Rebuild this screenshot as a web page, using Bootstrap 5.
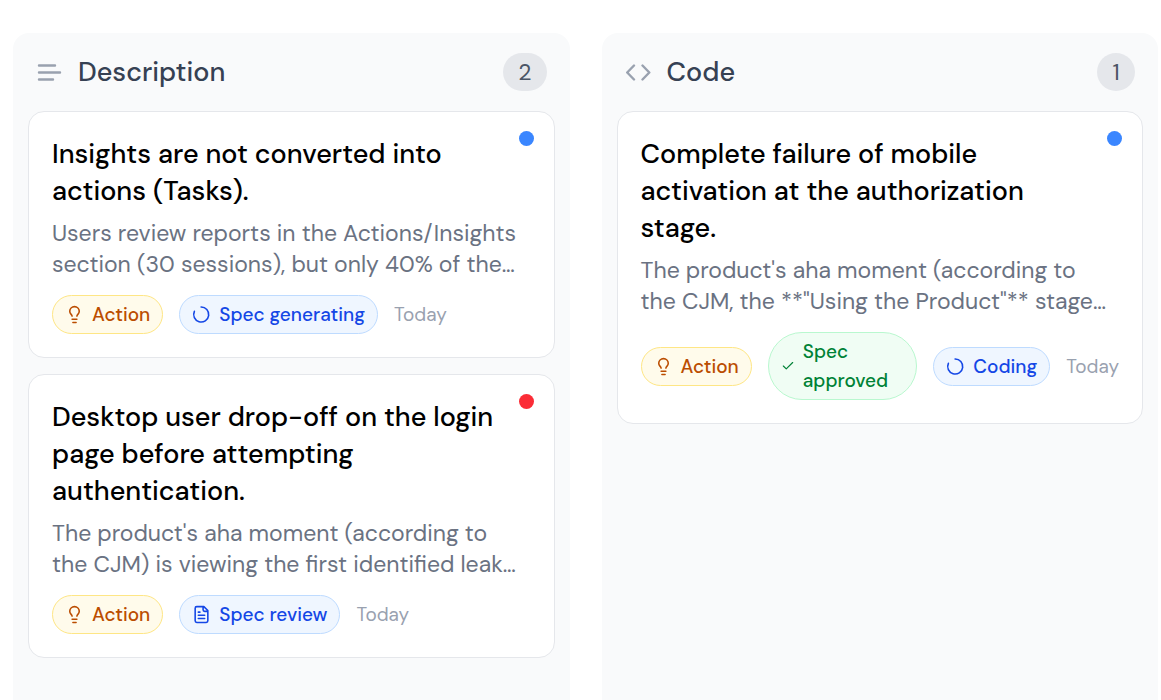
<!doctype html>
<html lang="en">
<head>
<meta charset="utf-8">
<meta name="viewport" content="width=device-width, initial-scale=1">
<title>Task board</title>
<link href="https://cdn.jsdelivr.net/npm/bootstrap@5.3.0/dist/css/bootstrap.min.css" rel="stylesheet">
<style>
  body { font-family: "DM Sans", Inter, "Open Sans", sans-serif; background: #fff; }
  .board { gap: 32px; padding: 33px 3px 0 13px; }
  .lane { flex: 1 1 0; min-width: 0; background: #f9fafb; border-radius: 16px 16px 0 0; padding: 20px 15px 16px; }
  .lane-head { padding: 0 8px 0 9px; margin-bottom: 20px; }
  .lane-head h2 { font-size: 27px; line-height: 38px; font-weight: 500; color: #364153; }
  .lane-icon { width: 25px; height: 26px; margin-right: 16px; color: #99a1af; }
  .count { font-size: 23px; line-height: 38px; min-width: 38px; padding: 0 15px; border-radius: 19px; background: #e5e7eb; color: #4a5565; }
  .task { border: 1px solid #e5e7eb; border-radius: 16px; background: #fff; padding: 23px; }
  .task h3 { font-size: 27px; line-height: 37px; font-weight: 500; color: #000; margin-bottom: 9px; padding-right: 30px; }
  .task p { font-size: 23px; line-height: 31px; color: #6a7282; margin-bottom: 15px; padding-right: 6px; }
  .dot { top: 19px; right: 20px; width: 15px; height: 15px; }
  .dot-blue { background: #3a86ff; }
  .dot-red { background: #fb2c36; }
  .meta { gap: 16px; font-size: 19px; line-height: 29px; }
  .chip { gap: 8px; padding: 4px 12px; border: 1px solid; border-radius: 34px; font-weight: 500; }
  .chip-icon { width: 19px; height: 19px; }
  .chip-check { width: 14px; height: 14px; }
  .chip-amber { background: #fffbeb; border-color: #fee685; color: #bb4d00; }
  .chip-blue { background: #eff6ff; border-color: #bedbff; color: #1447e6; }
  .chip-green { background: #f0fdf4; border-color: #b9f8cf; color: #008236; }
  .when { color: #99a1af; }
  .line-art { fill: none; stroke: currentColor; stroke-width: 2; stroke-linecap: round; stroke-linejoin: round; }
</style>
</head>
<body>
<svg class="d-none" aria-hidden="true">
  <symbol id="bulb" viewBox="0 0 24 24"><path d="M15 14c.2-1 .7-1.700 1.500-2.500 1-.9 1.500-2.200 1.500-3.500A6 6 0 0 0 6 8c0 1 .2 2.200 1.500 3.500.7.7 1.300 1.500 1.500 2.500M9 18h6M10 22h4"/></symbol>
  <symbol id="spin" viewBox="0 0 24 24"><path d="M11.500 2.500A9.500 9.500 0 1 1 3 8"/></symbol>
  <symbol id="doc" viewBox="0 0 24 24"><path d="M15 2H6a2 2 0 0 0-2 2v16a2 2 0 0 0 2 2h12a2 2 0 0 0 2-2V7ZM14 2v4a2 2 0 0 0 2 2h4M10 9H8M16 13H8M16 17H8"/></symbol>
  <symbol id="check" viewBox="0 0 24 24"><path d="M20 6 9 17l-5-5"/></symbol>
</svg>
<main class="board d-flex min-vh-100">
  <section class="lane">
    <header class="lane-head d-flex align-items-center">
      <svg class="lane-icon line-art flex-shrink-0" viewBox="0 0 25 26" aria-hidden="true"><path stroke-width="2.400" d="M2 6.500h16M2 13.500h21M2 20.500h14"/></svg>
      <h2 class="mb-0 me-auto">Description</h2>
      <span class="count text-center">2</span>
    </header>
    <div class="d-grid gap-3">
      <article class="task position-relative">
        <span class="dot dot-blue rounded-circle position-absolute"></span>
        <h3>Insights are not converted into actions (Tasks).</h3>
        <p>Users review reports in the Actions/Insights section (30 sessions), but only 40% of the…</p>
        <div class="meta d-flex align-items-center">
          <span class="chip chip-amber d-inline-flex align-items-center text-nowrap flex-shrink-0"><svg class="chip-icon line-art"><use href="#bulb"/></svg>Action</span>
          <span class="chip chip-blue d-inline-flex align-items-center text-nowrap flex-shrink-0"><svg class="chip-icon line-art"><use href="#spin"/></svg>Spec generating</span>
          <span class="when">Today</span>
        </div>
      </article>
      <article class="task position-relative">
        <span class="dot dot-red rounded-circle position-absolute"></span>
        <h3>Desktop user drop-off on the login page before attempting authentication.</h3>
        <p>The product's aha moment (according to the CJM) is viewing the first identified leak…</p>
        <div class="meta d-flex align-items-center">
          <span class="chip chip-amber d-inline-flex align-items-center text-nowrap flex-shrink-0"><svg class="chip-icon line-art"><use href="#bulb"/></svg>Action</span>
          <span class="chip chip-blue d-inline-flex align-items-center text-nowrap flex-shrink-0"><svg class="chip-icon line-art"><use href="#doc"/></svg>Spec review</span>
          <span class="when">Today</span>
        </div>
      </article>
    </div>
  </section>
  <section class="lane">
    <header class="lane-head d-flex align-items-center">
      <svg class="lane-icon line-art flex-shrink-0" viewBox="0 0 25 26" aria-hidden="true"><path stroke-width="2.400" d="M8 6.500 1.200 13.500 8 20.500M16.500 6.500l6.800 7-6.800 7"/></svg>
      <h2 class="mb-0 me-auto">Code</h2>
      <span class="count text-center">1</span>
    </header>
    <div class="d-grid gap-3">
      <article class="task position-relative">
        <span class="dot dot-blue rounded-circle position-absolute"></span>
        <h3>Complete failure of mobile activation at the authorization stage.</h3>
        <p>The product's aha moment (according to the CJM, the **"Using the Product"** stage…</p>
        <div class="meta d-flex align-items-center">
          <span class="chip chip-amber d-inline-flex align-items-center text-nowrap flex-shrink-0"><svg class="chip-icon line-art"><use href="#bulb"/></svg>Action</span>
          <span class="chip chip-green d-inline-flex align-items-center"><svg class="chip-check line-art flex-shrink-0"><use href="#check"/></svg>Spec approved</span>
          <span class="chip chip-blue d-inline-flex align-items-center text-nowrap flex-shrink-0"><svg class="chip-icon line-art"><use href="#spin"/></svg>Coding</span>
          <span class="when">Today</span>
        </div>
      </article>
    </div>
  </section>
</main>
<script src="https://cdn.jsdelivr.net/npm/bootstrap@5.3.0/dist/js/bootstrap.bundle.min.js"></script>
</body>
</html>
